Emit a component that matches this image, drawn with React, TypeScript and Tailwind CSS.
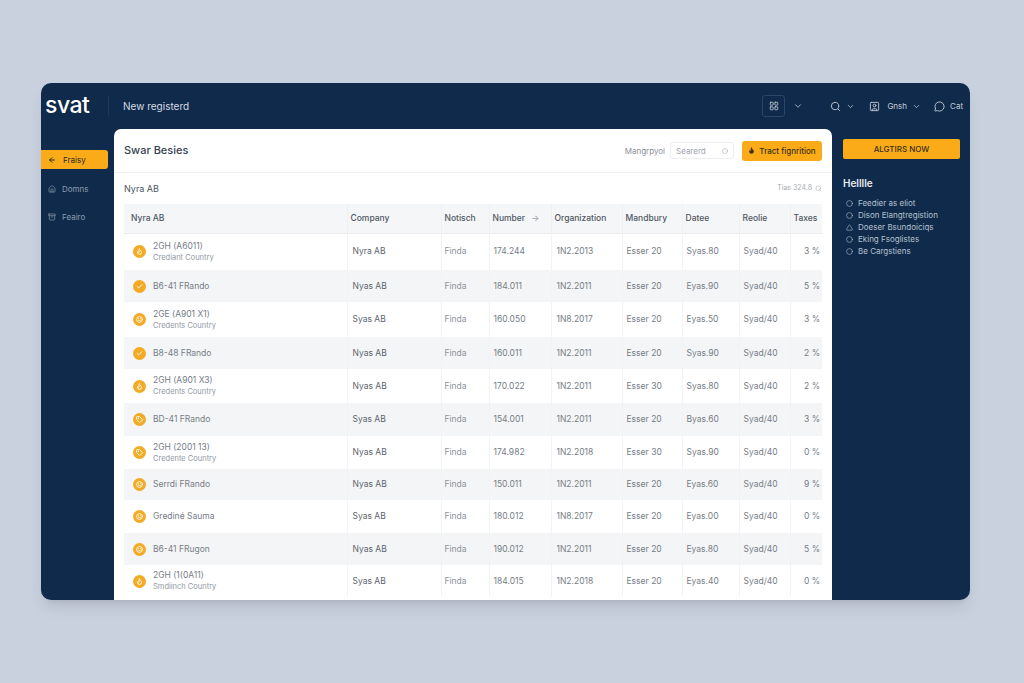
import { ChevronDown, ArrowRight, Search, UserSquare, MessageCircle, LayoutGrid, Circle, Home, Archive, Flame, Check, Tag, Smile, Triangle } from 'lucide-react';

const columns = [
  { label: 'Nyra AB', width: 'w-[223px]' },
  { label: 'Company', width: 'w-[94px]' },
  { label: 'Notisch', width: 'w-[48px]' },
  { label: 'Number', width: 'w-[62px]' },
  { label: 'Organization', width: 'w-[71px]' },
  { label: 'Mandbury', width: 'w-[60px]' },
  { label: 'Datee', width: 'w-[57px]' },
  { label: 'Reolie', width: 'w-[51px]' },
  { label: 'Taxes', width: 'w-[32px]' },
];

const rows = [
  { h: 'h-[37px]', icon: Flame, name: '2GH (A6011)', sub: 'Crediant Country', company: 'Nyra AB', fin: 'Finda', num: '174.244', org: '1N2.2013', man: 'Esser 20', date: 'Syas.80', role: 'Syad/40', tax: '3 %' },
  { h: 'h-[32px]', icon: Check, name: 'B6-41 FRando', company: 'Nyas AB', fin: 'Finda', num: '184.011', org: '1N2.2011', man: 'Esser 20', date: 'Eyas.90', role: 'Syad/40', tax: '5 %' },
  { h: 'h-[35px]', icon: Smile, name: '2GE (A901 X1)', sub: 'Credents Country', company: 'Syas AB', fin: 'Finda', num: '160.050', org: '1N8.2017', man: 'Esser 20', date: 'Eyas.50', role: 'Syad/40', tax: '3 %' },
  { h: 'h-[32px]', icon: Check, name: 'B8-48 FRando', company: 'Nyas AB', fin: 'Finda', num: '160.011', org: '1N2.2011', man: 'Esser 20', date: 'Syas.90', role: 'Syad/40', tax: '2 %' },
  { h: 'h-[34px]', icon: Flame, name: '2GH (A901 X3)', sub: 'Credents Country', company: 'Nyas AB', fin: 'Finda', num: '170.022', org: '1N2.2011', man: 'Esser 30', date: 'Syas.80', role: 'Syad/40', tax: '2 %' },
  { h: 'h-[33px]', icon: Tag, name: 'BD-41 FRando', company: 'Syas AB', fin: 'Finda', num: '154.001', org: '1N2.2011', man: 'Esser 20', date: 'Byas.60', role: 'Syad/40', tax: '3 %' },
  { h: 'h-[33px]', icon: Tag, name: '2GH (2001 13)', sub: 'Credente Country', company: 'Nyas AB', fin: 'Finda', num: '174.982', org: '1N2.2018', man: 'Esser 30', date: 'Syas.90', role: 'Syad/40', tax: '0 %' },
  { h: 'h-[31px]', icon: Smile, name: 'Serrdi FRando', company: 'Nyas AB', fin: 'Finda', num: '150.011', org: '1N2.2011', man: 'Esser 20', date: 'Eyas.60', role: 'Syad/40', tax: '9 %' },
  { h: 'h-[33px]', icon: Smile, name: 'Grediné Sauma', company: 'Syas AB', fin: 'Finda', num: '180.012', org: '1N8.2017', man: 'Esser 20', date: 'Eyas.00', role: 'Syad/40', tax: '0 %' },
  { h: 'h-[32px]', icon: Smile, name: 'B6-41 FRugon', company: 'Nyas AB', fin: 'Finda', num: '190.012', org: '1N2.2011', man: 'Esser 20', date: 'Eyas.80', role: 'Syad/40', tax: '5 %' },
  { h: 'h-[32px]', icon: Flame, name: '2GH (1(0A11)', sub: 'Smdiinch Country', company: 'Syas AB', fin: 'Finda', num: '184.015', org: '1N2.2018', man: 'Esser 20', date: 'Eyas.40', role: 'Syad/40', tax: '0 %' },
];

const helpLinks = [
  { label: 'Feedier as eliot', icon: Circle },
  { label: 'Dison Elangtregistion', icon: Circle },
  { label: 'Doeser Bsundoiciqs', icon: Triangle },
  { label: 'Eking Fsoglistes', icon: Circle },
  { label: 'Be Cargstiens', icon: Circle },
];

export default function App() {
  return (
    <div className="min-h-screen bg-[#c9d1df] pt-[83px] pl-[41px] font-['Inter',sans-serif]">
      <div className="flex h-[517px] w-[929px] flex-col overflow-hidden rounded-[10px] bg-[#0f2a4a] shadow-lg">
        {/* Шапка */}
        <header className="flex h-[46px] shrink-0 items-center text-[#c3ccd8]">
          <div className="w-[67px] pl-1 pt-[3px] text-[23px] font-medium leading-none tracking-[-0.5px] text-white -translate-y-[2px]">svat</div>
          <div className="h-[20px] w-px bg-[#1d3a5c]" />
          <div className="ml-[14px] text-[10px] text-[#d5dbe4]">New registerd</div>
          <div className="ml-auto flex items-center pr-[7px]">
            <div className="flex h-[22px] w-[23px] items-center justify-center rounded-[3px] border border-[#2a4668]">
              <LayoutGrid size={10} />
            </div>
            <ChevronDown size={10} className="ml-[8px]" />
            <Search size={11} className="ml-[27px]" />
            <ChevronDown size={9} className="ml-[5px]" />
            <UserSquare size={11} className="ml-[14px]" />
            <span className="ml-[7px] text-[8px]">Gnsh</span>
            <ChevronDown size={9} className="ml-[5px]" />
            <MessageCircle size={11} className="ml-[13px]" />
            <span className="ml-[5px] text-[8px]">Cat</span>
          </div>
        </header>

        <div className="flex min-h-0 flex-1">
          {/* Левое меню */}
          <aside className="w-[73px] shrink-0 pt-[21px]">
            <div className="flex h-[19px] w-[67px] items-center gap-[7px] rounded-r-[3px] bg-[#fbab18] pl-[7px] text-[8px] text-[#2a2a20]">
              <ArrowRight size={8} className="rotate-180" strokeWidth={3} />
              Fraisy
            </div>
            <div className="mt-[14px] flex items-center gap-[6px] pl-[7px] text-[8px] text-[#8d9cb0]">
              <Home size={8} />
              Domns
            </div>
            <div className="mt-[16px] flex items-center gap-[6px] pl-[7px] text-[8px] text-[#8d9cb0]">
              <Archive size={8} />
              Feairo
            </div>
          </aside>

          {/* Основная карточка */}
          <main className="w-[718px] shrink-0 overflow-hidden rounded-t-[7px] bg-white">
            <div className="flex h-[44px] items-center border-b border-[#eef0f2] pl-[10px] pr-[10px]">
              <h1 className="text-[11px] font-medium text-[#374151]">Swar Besies</h1>
              <div className="ml-auto flex items-center">
                <span className="text-[8px] text-[#8a8f98]">Mangrpyol</span>
                <div className="ml-[5px] flex h-[17px] w-[64px] items-center justify-between rounded-[3px] border border-[#eceef0] pl-[5px] pr-[5px] text-[8px] text-[#9ca3af]">
                  Searerd
                  <Circle size={6} />
                </div>
                <button className="ml-[8px] flex h-[20px] w-[80px] items-center justify-center gap-[4px] rounded-[3px] bg-[#fbab18] text-[8px] font-medium text-[#3a3018]">
                  <Flame size={7} fill="currentColor" />
                  Tract fignrition
                </button>
              </div>
            </div>
            <div className="flex h-[31px] items-center justify-between px-[10px]">
              <span className="text-[9px] text-[#4b5563]">Nyra AB</span>
              <span className="flex items-center gap-[3px] text-[7px] text-[#a6abb3]">
                Tias 324.8
                <Search size={7} />
              </span>
            </div>
            <div className="px-[10px]">
              <table className="w-[698px] table-fixed border-collapse">
                <thead>
                  <tr className="h-[29px] border-b border-[#e9ebee] bg-[#f5f6f7]">
                    {columns.map((col, i) => (
                      <th
                        key={col.label}
                        className={`${col.width} truncate border-l border-[#eff0f2] text-left text-[8.5px] font-medium text-[#4f5864] first:border-l-0 ${i === 0 ? 'pl-[7px]' : 'pl-[3px]'}`}
                      >
                        {col.label}
                        {col.label === 'Number' && <span className="ml-[6px] text-[#9ca3af]">→</span>}
                      </th>
                    ))}
                  </tr>
                </thead>
                <tbody className="text-[8.5px] text-[#767d87]">
                  {rows.map((row, i) => {
                    const Icon = row.icon;
                    return (
                      <tr key={i} className={`${row.h} ${i % 2 === 1 ? 'bg-[#f4f5f6]' : 'bg-white'}`}>
                        <td className="pl-[9px]">
                          <div className="flex items-center gap-[7px]">
                            <span className="flex h-[13px] w-[13px] items-center justify-center rounded-full bg-[#f3ab26] text-white">
                              <Icon size={7} strokeWidth={3} />
                            </span>
                            <div className="leading-[11px]">
                              <div>{row.name}</div>
                              {row.sub && <div className="text-[7.5px] text-[#9299a3]">{row.sub}</div>}
                            </div>
                          </div>
                        </td>
                        <td className="border-l border-[#f2f3f5] pl-[5px] text-[#5d646e]">{row.company}</td>
                        <td className="border-l border-[#f2f3f5] pl-[3px] text-[#8d939c]">{row.fin}</td>
                        <td className="border-l border-[#f2f3f5] pl-[4px]">{row.num}</td>
                        <td className="border-l border-[#f2f3f5] pl-[5px]">{row.org}</td>
                        <td className="border-l border-[#f2f3f5] pl-[4px]">{row.man}</td>
                        <td className="border-l border-[#f2f3f5] pl-[4px]">{row.date}</td>
                        <td className="border-l border-[#f2f3f5] pl-[4px]">{row.role}</td>
                        <td className="border-l border-[#f2f3f5] pr-[2px] text-right">{row.tax}</td>
                      </tr>
                    );
                  })}
                </tbody>
              </table>
            </div>
          </main>

          {/* Правая колонка */}
          <aside className="min-w-0 flex-1 pl-[11px] pr-[10px] pt-[10px]">
            <button className="flex h-[20px] w-[117px] items-center justify-center rounded-[2px] bg-[#fbab18] text-[8px] font-medium text-[#3a3018]">
              ALGTIRS NOW
            </button>
            <h2 className="mt-[16px] text-[10px] font-semibold leading-[16px] text-[#e8ecf1]">Helllle</h2>
            <ul className="mt-[6px] text-[8px] text-[#b6c1cf]">
              {helpLinks.map((link) => {
                const Icon = link.icon;
                return (
                  <li key={link.label} className="flex h-[12px] items-center gap-[5px] pl-[3px]">
                    <Icon size={7} />
                    <span className="whitespace-nowrap">{link.label}</span>
                  </li>
                );
              })}
            </ul>
          </aside>
        </div>
      </div>
    </div>
  );
}
